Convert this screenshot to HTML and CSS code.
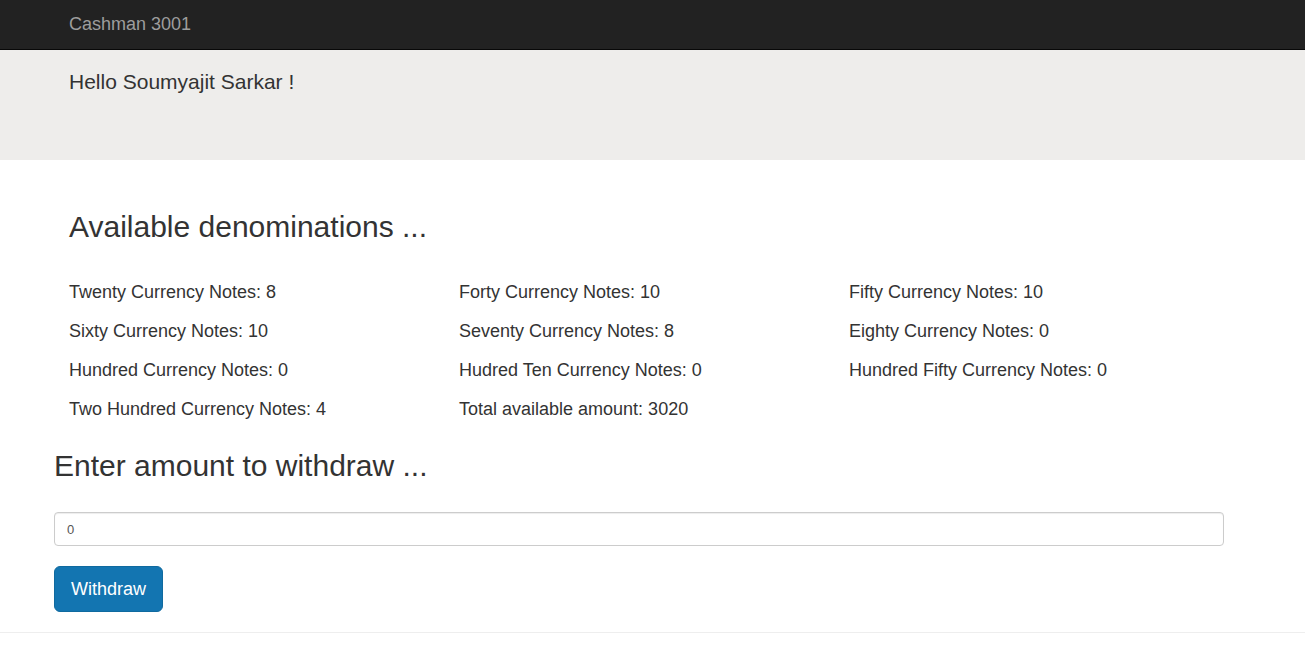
FILE: index.html
```html
<!DOCTYPE html>
<html>
<head>
<meta charset="utf-8">
<title>Cashman 3001</title>
<link rel="stylesheet" href="styles.css">
</head>
<body>
<nav class="navbar">
  <div class="container">
    <span class="brand">Cashman 3001</span>
  </div>
</nav>
<div class="jumbotron">
  <div class="container">
    <p class="hello">Hello Soumyajit Sarkar !</p>
  </div>
</div>
<main class="container main">
  <h2 class="title-indent">Available denominations ...</h2>
  <div class="grid">
    <div class="item">Twenty Currency Notes: 8</div>
    <div class="item">Forty Currency Notes: 10</div>
    <div class="item">Fifty Currency Notes: 10</div>
    <div class="item">Sixty Currency Notes: 10</div>
    <div class="item">Seventy Currency Notes: 8</div>
    <div class="item">Eighty Currency Notes: 0</div>
    <div class="item">Hundred Currency Notes: 0</div>
    <div class="item">Hudred Ten Currency Notes: 0</div>
    <div class="item">Hundred Fifty Currency Notes: 0</div>
    <div class="item">Two Hundred Currency Notes: 4</div>
    <div class="item">Total available amount: 3020</div>
  </div>
  <h2 class="title-withdraw">Enter amount to withdraw ...</h2>
  <input class="amount" type="text" value="0">
  <button class="btn" type="button">Withdraw</button>
</main>
<footer class="footer"></footer>
</body>
</html>
```
FILE: styles.css
```css
html, body {
  margin: 0;
  padding: 0;
}
body {
  font-family: "Liberation Sans", Arial, sans-serif;
  color: #333;
  background: #fff;
}
.container {
  width: 1170px;
  margin-left: 54px;
  box-sizing: border-box;
}
.navbar {
  height: 49px;
  background: #222;
  border-bottom: 1px solid #080808;
}
.brand {
  display: block;
  padding: 14px 15px 0;
  font-size: 18px;
  line-height: 20px;
  color: #9d9d9d;
}
.jumbotron {
  height: 110px;
  box-sizing: border-box;
  background: #eeedeb;
  padding-top: 17px;
}
.hello {
  margin: 0;
  padding: 0 15px;
  font-size: 21px;
  line-height: 30px;
  font-weight: 400;
}
.main {
  padding-top: 50px;
}
h2 {
  margin: 0;
  font-size: 30px;
  line-height: 33px;
  font-weight: 400;
}
.title-indent {
  padding: 0 15px;
}
.grid {
  display: grid;
  grid-template-columns: repeat(3, 390px);
  row-gap: 19px;
  margin-top: 39px;
}
.item {
  padding: 0 15px;
  font-size: 18px;
  line-height: 20px;
}
.title-withdraw {
  margin-top: 30px;
}
.amount {
  display: block;
  box-sizing: border-box;
  width: 1170px;
  height: 34px;
  margin: 30px 0 0;
  padding: 6px 12px;
  font-family: "Liberation Sans", Arial, sans-serif;
  font-size: 13px;
  color: #555;
  background: #fff;
  border: 1px solid #ccc;
  border-radius: 4px;
  box-shadow: inset 0 1px 1px rgba(0,0,0,0.075);
  outline: none;
}
.btn {
  display: block;
  margin-top: 20px;
  height: 46px;
  padding: 10px 16px;
  font-family: "Liberation Sans", Arial, sans-serif;
  font-size: 18px;
  line-height: 24px;
  color: #fff;
  background: #1375b1;
  border: 1px solid #106a9f;
  border-radius: 6px;
  cursor: pointer;
}
.footer {
  margin-top: 20px;
  border-top: 1px solid #eee;
}
```
